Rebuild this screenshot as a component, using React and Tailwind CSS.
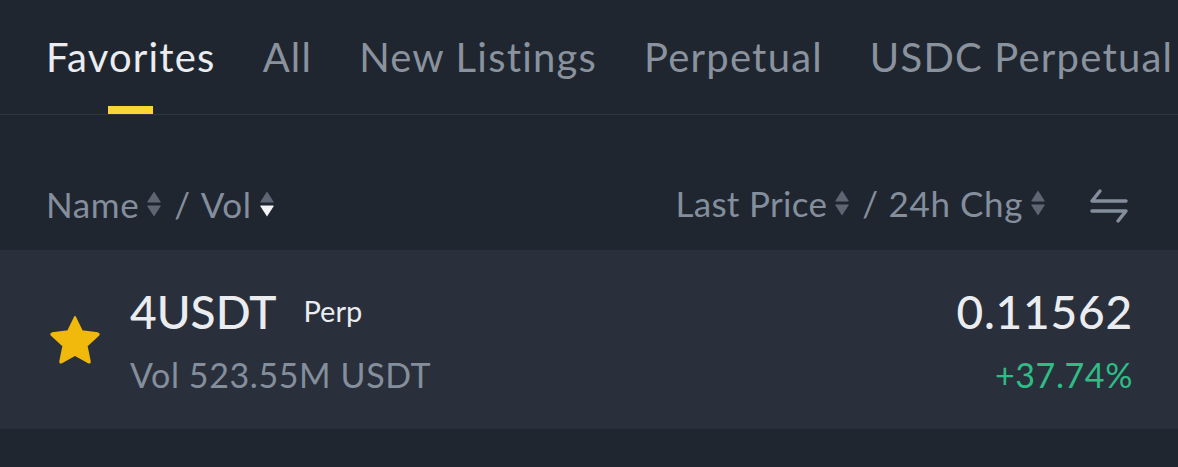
import React from "react";

const font = { fontFamily: "Lato, 'Open Sans', sans-serif" };

function SortArrows({ active }) {
  return (
    <svg width="16" height="28" viewBox="0 0 16 28" className="mx-[7px]">
      <path d="M8 1.5 L14.5 11.5 Q15 12.5 14 12.5 L2 12.5 Q1 12.5 1.5 11.5 Z" fill="#5e6673" />
      <path
        d="M8 26.5 L14.5 16.5 Q15 15.5 14 15.5 L2 15.5 Q1 15.5 1.5 16.5 Z"
        fill={active === "down" ? "#f3f4f6" : "#5e6673"}
      />
    </svg>
  );
}

function SwapIcon() {
  return (
    <svg width="40" height="36" viewBox="0 0 40 36" fill="none" stroke="#848e9c" strokeWidth="3.5" strokeLinecap="round" strokeLinejoin="round">
      <path d="M11 3 L3 13 L37 13" />
      <path d="M3 23 L37 23 L29 33" />
    </svg>
  );
}

function Star() {
  return (
    <svg width="54" height="52" viewBox="0 0 24 23">
      <path
        d="M12 1.2 L15.1 7.6 L22.1 8.5 Q22.9 8.7 22.4 9.3 L17.2 14.1 L18.6 21 Q18.7 21.8 18 21.5 L12 18.1 L6 21.5 Q5.3 21.8 5.4 21 L6.8 14.1 L1.6 9.3 Q1.1 8.7 1.9 8.5 L8.9 7.6 Z"
        fill="#f0b90b"
        stroke="#f0b90b"
        strokeWidth="0.8"
        strokeLinejoin="round"
      />
    </svg>
  );
}

export default function App() {
  const tabs = ["Favorites", "All", "New Listings", "Perpetual", "USDC Perpetual"];
  return (
    <div className="w-[1178px] h-[467px] bg-[#1f2630] overflow-hidden" style={font}>
      {/* Tabs */}
      <div className="h-[115px] border-b border-[#2f3641] flex items-start pl-[46px] gap-[47px] whitespace-nowrap">
        {tabs.map((t, i) => (
          <div key={t} className="flex flex-col items-center pt-[37px]">
            <span
              className={
                "text-[40px] leading-[40px] tracking-[1.2px] " +
                (i === 0 ? "text-[#eaecef]" : "text-[#8a929e]")
              }
            >
              {t}
            </span>
            <div className={"mt-[29px] h-[8px] w-[45px] " + (i === 0 ? "bg-[#fcd535]" : "bg-transparent")} />
          </div>
        ))}
      </div>

      {/* Header */}
      <div className="h-[135px] flex items-end pb-[26px] px-[46px] justify-between text-[#848e9c] text-[35px] leading-[40px] tracking-[0.6px]">
        <div className="flex items-center">
          <span>Name</span>
          <SortArrows />
          <span className="mx-[5px]">/</span>
          <span className="ml-[5px]">Vol</span>
          <SortArrows active="down" />
        </div>
        <div className="flex items-center">
          <span className="tracking-[0.3px]">Last Price</span>
          <SortArrows />
          <span className="mx-[5px]">/</span>
          <span className="ml-[5px]">24h Chg</span>
          <SortArrows />
          <div className="ml-[36px] mr-[3px] mt-[6px]">
            <SwapIcon />
          </div>
        </div>
      </div>

      {/* Row */}
      <div className="h-[179px] bg-[#29303b] flex items-center pl-[48px] pr-[45px]">
        <Star />
        <div className="ml-[28px] flex flex-col">
          <div className="flex items-center">
            <span className="text-[46px] leading-[56px] text-[#eaecef] font-medium">4USDT</span>
            <span className="ml-[27px] text-[29px] text-[#eaecef] mb-[2px]">Perp</span>
          </div>
          <span className="mt-[15px] text-[34px] leading-[40px] tracking-[0.6px] text-[#848e9c]">Vol 523.55M USDT</span>
        </div>
        <div className="ml-auto flex flex-col items-end">
          <span className="text-[46px] leading-[56px] text-[#eaecef] font-medium tracking-[0.8px]">0.11562</span>
          <span className="mt-[15px] text-[34px] leading-[40px] tracking-[0.6px] text-[#2ebd85]">+37.74%</span>
        </div>
      </div>
    </div>
  );
}
